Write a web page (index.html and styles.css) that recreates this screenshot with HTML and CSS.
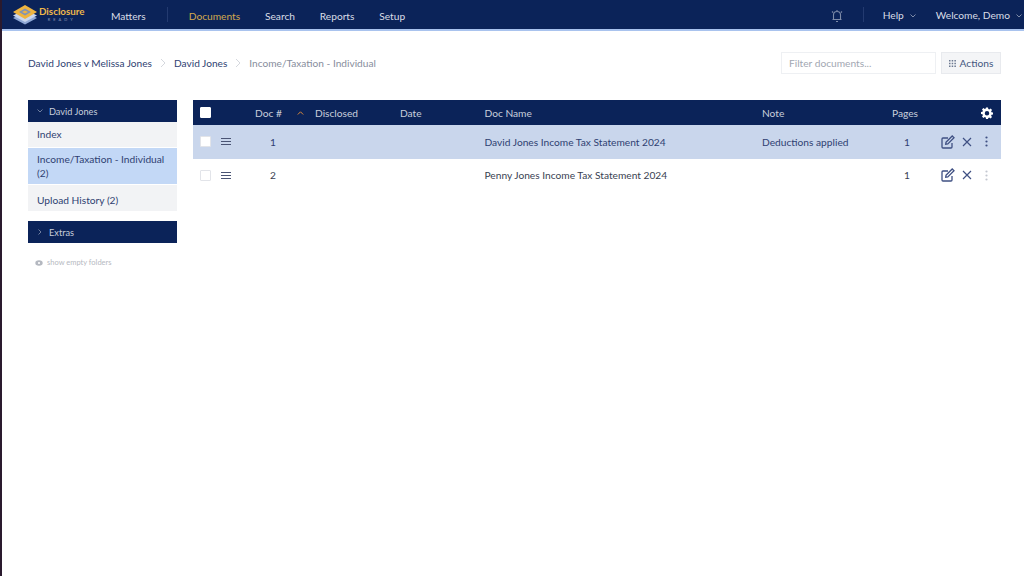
FILE: index.html
```html
<!DOCTYPE html>
<html lang="en">
<head>
<meta charset="utf-8">
<title>Disclosure Ready</title>
<link rel="stylesheet" href="styles.css">
</head>
<body>
<header class="nav">
  <div class="brand">
    <svg class="logo" width="26" height="22" viewBox="0 0 26 22">
      <path d="M13 8 25 14 13 20.500 1 14Z" fill="#8fa8d6"/>
      <path d="M13 5.500 25 11.500 13 18 1 11.500Z" fill="#c9d6ee"/>
      <path d="M13 1 25 8 13 15 1 8Z" fill="#eeb440"/>
      <path d="M13 4.500 19 8 13 11.500 7 8Z" fill="#7f93b8"/>
      <path d="M13 6.500 16 8 13 9.500 10 8Z" fill="#eeb440"/>
    </svg>
    <div class="brand-text">
      <span class="brand-name">Disclosure</span>
      <span class="brand-sub">READY</span>
    </div>
  </div>
  <a class="nav-link matters">Matters</a>
  <span class="nav-sep"></span>
  <a class="nav-link active">Documents</a>
  <a class="nav-link">Search</a>
  <a class="nav-link">Reports</a>
  <a class="nav-link">Setup</a>
  <span class="spacer"></span>
  <svg class="bell" width="12" height="14" viewBox="0 0 12 14" fill="none" stroke="#7e8ba8" stroke-width="1.100">
    <path d="M2.500 10.500V6a3.500 3.500 0 0 1 7 0v4.500ZM1.500 10.500h9M5 12.500h2M6 1v1.500M1 2.500 2 3.500M11 2.500 10 3.500"/>
  </svg>
  <span class="nav-sep right"></span>
  <a class="nav-link help">Help<svg class="chev" width="6" height="4" viewBox="0 0 6 4"><path d="M.5.500 3 3 5.500.500" fill="none" stroke="#7e8ba8"/></svg></a>
  <a class="nav-link welcome">Welcome, Demo<svg class="chev" width="6" height="4" viewBox="0 0 6 4"><path d="M.5.500 3 3 5.500.500" fill="none" stroke="#7e8ba8"/></svg></a>
</header>

<main class="page">
  <div class="topbar">
    <nav class="crumbs">
      <a>David Jones v Melissa Jones</a>
      <svg class="crumb-sep" width="6" height="10" viewBox="0 0 6 10"><path d="M1 1 5 5 1 9" fill="none" stroke="#d5d8de"/></svg>
      <a>David Jones</a>
      <svg class="crumb-sep" width="6" height="10" viewBox="0 0 6 10"><path d="M1 1 5 5 1 9" fill="none" stroke="#d5d8de"/></svg>
      <span class="crumb-current">Income/Taxation - Individual</span>
    </nav>
    <div class="tools">
      <div class="filter">Filter documents...</div>
      <button class="actions"><svg width="7" height="7" viewBox="0 0 7 7" fill="#6b7890"><path d="M0 0h1.500v1.500H0zM2.700 0h1.500v1.500H2.700zM5.400 0h1.500v1.500H5.400zM0 2.700h1.500v1.500H0zM2.700 2.700h1.500v1.500H2.700zM5.400 2.700h1.500v1.500H5.400zM0 5.400h1.500v1.500H0zM2.700 5.400h1.500v1.500H2.700zM5.400 5.400h1.500v1.500H5.400z"/></svg>Actions</button>
    </div>
  </div>

  <div class="content">
    <aside class="side">
      <div class="side-head"><svg width="6" height="6" viewBox="0 0 6 6"><path d="M.5 1.500 3 4 5.500 1.500" fill="none" stroke="#6f7e9e"/></svg>David Jones</div>
      <a class="side-item first">Index</a>
      <a class="side-item selected">Income/Taxation - Individual (2)</a>
      <a class="side-item last">Upload History (2)</a>
      <div class="side-head extras"><svg width="6" height="6" viewBox="0 0 6 6"><path d="M1.500.500 4 3 1.500 5.500" fill="none" stroke="#6f7e9e"/></svg>Extras</div>
      <div class="show-empty">
        <svg width="8" height="6" viewBox="0 0 8 6"><ellipse cx="4" cy="3" rx="3.700" ry="2.700" fill="#b4b8c0"/><circle cx="4" cy="3" r="1.100" fill="#fff"/></svg>
        show empty folders
      </div>
    </aside>

    <section class="table">
      <div class="row head">
        <span class="cell-check"><i class="box solid"></i></span>
        <span></span>
        <span>Doc #</span>
        <span class="sort"><svg width="7" height="4" viewBox="0 0 7 4"><path d="M.8 3.500 3.500.800 6.200 3.500" fill="none" stroke="#d9893c"/></svg></span>
        <span>Disclosed</span>
        <span>Date</span>
        <span>Doc Name</span>
        <span>Note</span>
        <span>Pages</span>
        <span class="cell-gear">
          <svg width="12" height="12" viewBox="0 0 24 24" fill="#fff"><path fill-rule="evenodd" d="M10 1h4l.6 3.200 2 .8L19.300 3.200l2.800 2.800L20.200 8.700l.8 2L24 11v4l-3 .5-.8 2 1.800 2.600-2.800 2.800-2.700-1.800-2 .8L14 24h-4l-.5-3-2-.8-2.700 1.800L2 19.200l1.800-2.600-.8-2L0 14v-4l3-.6.8-2L2 4.800 4.800 2l2.700 1.800 2-.8ZM12 8a4.500 4.500 0 1 0 0 9 4.500 4.500 0 0 0 0-9Z"/></svg>
        </span>
      </div>

      <div class="row item hilite">
        <span class="cell-check"><i class="box"></i></span>
        <span class="drag"><i></i><i></i><i></i></span>
        <span class="num">1</span>
        <span></span><span></span><span></span>
        <span>David Jones Income Tax Statement 2024</span>
        <span>Deductions applied</span>
        <span class="pages">1</span>
        <span class="ops">
          <svg width="14" height="14" viewBox="0 0 14 14" fill="none" stroke="#3f5083" stroke-width="1.300"><path d="M11 8v4a1 1 0 0 1-1 1H2a1 1 0 0 1-1-1V4a1 1 0 0 1 1-1h5"/><path d="M5 7.200 11.200 1l1.800 1.800L6.800 9 4.700 9.300Z"/></svg>
          <svg width="10" height="10" viewBox="0 0 10 10" fill="none" stroke="#3f5083" stroke-width="1.200"><path d="M1 1 9 9M9 1 1 9"/></svg>
          <svg class="dots" width="3" height="11" viewBox="0 0 3 11" fill="#3f5083"><circle cx="1.500" cy="1.500" r="1.100"/><circle cx="1.500" cy="5.500" r="1.100"/><circle cx="1.500" cy="9.500" r="1.100"/></svg>
        </span>
      </div>

      <div class="row item">
        <span class="cell-check"><i class="box"></i></span>
        <span class="drag"><i></i><i></i><i></i></span>
        <span class="num">2</span>
        <span></span><span></span><span></span>
        <span>Penny Jones Income Tax Statement 2024</span>
        <span></span>
        <span class="pages">1</span>
        <span class="ops">
          <svg width="14" height="14" viewBox="0 0 14 14" fill="none" stroke="#3f5083" stroke-width="1.300"><path d="M11 8v4a1 1 0 0 1-1 1H2a1 1 0 0 1-1-1V4a1 1 0 0 1 1-1h5"/><path d="M5 7.200 11.200 1l1.800 1.800L6.800 9 4.700 9.300Z"/></svg>
          <svg width="10" height="10" viewBox="0 0 10 10" fill="none" stroke="#3f5083" stroke-width="1.200"><path d="M1 1 9 9M9 1 1 9"/></svg>
          <svg class="dots" width="3" height="11" viewBox="0 0 3 11" fill="#c3c7d0"><circle cx="1.500" cy="1.500" r="1.100"/><circle cx="1.500" cy="5.500" r="1.100"/><circle cx="1.500" cy="9.500" r="1.100"/></svg>
        </span>
      </div>
    </section>
  </div>
</main>
</body>
</html>
```
FILE: styles.css
```css
* { box-sizing: border-box; }
html, body { height: 100%; }
body {
  margin: 0;
  background: #fff;
  border-left: 2px solid #2a1a2e;
  font-family: Lato, "Open Sans", sans-serif;
  font-size: 10px;
  color: #2f3f72;
  overflow: hidden;
}
.nav {
  height: 31px;
  background: #0b2359;
  border-bottom: 2px solid #a9c3ee;
  display: flex;
  align-items: center;
  color: #d9dde6;
  font-size: 10.200px;
}
.brand { display: flex; align-items: center; margin-left: 10px; width: 99px; gap: 1px; }
.logo { flex: none; }
.brand-text { display: flex; flex-direction: column; align-items: center; line-height: 1; }
.brand-name { color: #eeb84a; font-size: 9.800px; font-weight: 700; }
.brand-sub { color: #8e9ab8; font-size: 4px; letter-spacing: 3px; margin-top: 2px; }
.nav-link { margin: 2px 24.800px 0 0; white-space: nowrap; }
.nav-link.matters { margin-right: 21px; }
.nav-link.active { color: #d2a94e; }
.nav-sep { width: 1px; height: 15px; background: #233a70; margin-right: 21px; }
.nav-sep.right { margin: 0 18.500px 0 20px; }
.spacer { flex: 1; }
.bell { flex: none; margin-top: 2px; }
.nav-link.help { margin: 0 20px 0 0; }
.nav-link.welcome { margin: 0 2px 0 0; }
.chev { margin-left: 6px; vertical-align: middle; }
.page { padding: 21px 23px 0 26px; }
.topbar { display: flex; align-items: center; justify-content: space-between; height: 22px; }
.crumbs { display: flex; align-items: center; font-size: 10.150px; }
.crumb-sep { margin: 0 8px; }
.crumb-current { color: #878d9c; }
.tools { display: flex; align-items: center; gap: 5px; }
.filter {
  width: 155px;
  height: 22px;
  border: 1px solid #eef0f3;
  padding: 0 7px;
  display: flex;
  align-items: center;
  color: #a2a7b2;
  font-size: 10.200px;
}
.actions {
  width: 60px;
  height: 22px;
  border: 1px solid #e8eaee;
  background: #f4f5f7;
  display: flex;
  align-items: center;
  justify-content: center;
  gap: 4px;
  padding: 0;
  font: inherit;
  font-size: 10.200px;
  color: #44557f;
}
.content { display: flex; gap: 16px; margin-top: 26px; align-items: flex-start; }
.side { width: 149px; flex: none; background: #fff; }
.side-head {
  height: 22px;
  background: #0b2359;
  color: #c9cfdc;
  font-size: 9.200px;
  display: flex;
  align-items: center;
  gap: 6px;
  padding-left: 9px;
}
.side-head.extras { margin-top: 9px; }
.side-item {
  display: flex;
  align-items: center;
  min-height: 26px;
  padding: 0 9px;
  background: #f2f3f5;
  line-height: 14px;
  font-size: 10.200px;
  border-bottom: 1px solid #fff;
}
.side-item.first { padding-bottom: 2px; }
.side-item.selected { background: #c3d8f6; min-height: 37px; }
.side-item.last { min-height: 27px; padding-top: 4px; }
.show-empty {
  display: flex;
  align-items: center;
  gap: 4px;
  margin: 15px 0 0 7px;
  color: #b6b9c1;
  font-size: 7.500px;
}
.table { flex: 1; min-width: 0; }
.row {
  display: grid;
  grid-template-columns: 28px 34px 36px 24px 85px 84.500px 277.500px 130px 48px 61px;
  align-items: center;
  font-size: 10.200px;
}
.row.head { height: 25px; background: #0b2359; color: #c9cfdc; }
.row.item { height: 33.500px; color: #3a3f52; }
.row.hilite { background: #c9d6ec; color: #2f3f72; }
.cell-check { padding-left: 7px; display: flex; }
.box {
  display: block;
  width: 11px;
  height: 11px;
  background: #fff;
  border: 1px solid #e2e4e9;
  border-radius: 1px;
}
.box.solid { border-color: #fff; }
.drag { display: flex; flex-direction: column; gap: 2px; width: 10px; }
.drag i { display: block; height: 1px; background: #4a5474; }
.num, .pages { text-align: center; }
.pages { padding-right: 18px; }
.sort { display: flex; padding-left: 6px; }
.cell-gear { display: flex; justify-content: flex-end; padding-right: 8px; }
.ops { display: flex; align-items: center; gap: 7px; padding-left: 1px; }
.dots { margin-left: 5.500px; }
```
